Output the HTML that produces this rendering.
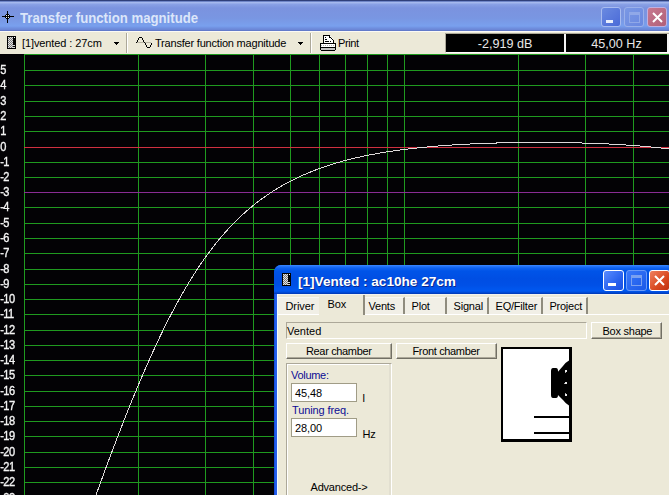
<!DOCTYPE html>
<html><head><meta charset="utf-8">
<style>
*{box-sizing:border-box;margin:0;padding:0}
html,body{width:669px;height:495px;overflow:hidden;background:#000;font-family:"Liberation Sans",sans-serif;font-size:11px;color:#000}
.a{position:absolute}
.t{position:absolute;white-space:pre;line-height:1}
#title{left:0;top:0;width:669px;height:31px;background:linear-gradient(#2f3f7a 0px,#2f3f7a 1px,#6f86c8 1px,#6f86c8 2px,#a7baee 2px,#a2b6ec 3px,#8aa2e6 4px,#7b93df 8px,#7996e2 18px,#79a0ee 26px,#7090e0 28px,#6a84d4 30px,#5a70c0 31px)}
#tb{left:0;top:31px;width:669px;height:23px;background:#ece9d8;border-top:1px solid #fbfaf5}
.disp{position:absolute;top:33px;height:19px;background:#000;color:#e8e8e8;font-size:12.6px;text-align:center;line-height:19px}
.btn{position:absolute;background:#ece9d8;border:1px solid;border-color:#fff #716f64 #716f64 #fff;text-align:center;line-height:14px;letter-spacing:-0.3px}
</style></head><body>
<!-- main title bar -->
<div id="title" class="a"></div>
<svg class="a" style="left:0px;top:0px" width="16" height="28" viewBox="0 0 16 28" shape-rendering="crispEdges"><rect x="7" y="11" width="1" height="12" fill="#000"/><rect x="2" y="16" width="12" height="1" fill="#000"/><rect x="6" y="14" width="3" height="1" fill="#000"/><rect x="6" y="18" width="3" height="1" fill="#000"/><rect x="5" y="15" width="1" height="3" fill="#000"/><rect x="9" y="15" width="1" height="3" fill="#000"/><rect x="6" y="15" width="3" height="3" fill="#000"/><rect x="6" y="15" width="1" height="1" fill="#f0f0f0"/><rect x="8" y="15" width="1" height="1" fill="#f0f0f0"/><rect x="6" y="17" width="1" height="1" fill="#f0f0f0"/><rect x="8" y="17" width="1" height="1" fill="#f0f0f0"/></svg>
<div class="t" style="left:20px;top:11.2px;font-size:14.2px;font-weight:bold;color:#dce6fa;transform:scaleX(0.93);transform-origin:0 0">Transfer function magnitude</div>
<!-- title buttons (inactive) -->
<div class="a" style="left:601px;top:7px;width:20px;height:20px;border:1px solid #a8bcf0;border-radius:3px;background:linear-gradient(135deg,#6a8ae0,#4a6ad8)"></div>
<div class="a" style="left:606px;top:20px;width:7px;height:3px;background:#e8eefc"></div>
<div class="a" style="left:624px;top:7px;width:20px;height:20px;border:1px solid #9ab0ea;border-radius:3px;background:linear-gradient(135deg,#7a98e4,#6a88e0)"></div>
<div class="a" style="left:629px;top:12px;width:11px;height:11px;border:1px solid #90a8e8;border-top-width:3px"></div>
<div class="a" style="left:647px;top:7px;width:20px;height:20px;border:1px solid #c0b0e0;border-radius:3px;background:linear-gradient(135deg,#c87890,#b06078)"></div>
<svg class="a" style="left:652px;top:12px" width="11" height="11" viewBox="0 0 11 11"><path d="M1,1 L10,10 M10,1 L1,10" stroke="#fff" stroke-width="2"/></svg>
<svg width="669" height="441" viewBox="0 54 669 441" style="position:absolute;left:0;top:54px;will-change:transform" shape-rendering="crispEdges">
<rect x="0" y="54" width="669" height="441" fill="#030205"/>
<rect x="24" y="54" width="645" height="1" fill="#1f9a1f"/>
<rect x="24" y="70" width="645" height="1" fill="#1f9a1f"/>
<rect x="24" y="85" width="645" height="1" fill="#1f9a1f"/>
<rect x="24" y="101" width="645" height="1" fill="#1f9a1f"/>
<rect x="24" y="116" width="645" height="1" fill="#1f9a1f"/>
<rect x="24" y="131" width="645" height="1" fill="#1f9a1f"/>
<rect x="24" y="162" width="645" height="1" fill="#1f9a1f"/>
<rect x="24" y="177" width="645" height="1" fill="#1f9a1f"/>
<rect x="24" y="207" width="645" height="1" fill="#1f9a1f"/>
<rect x="24" y="223" width="645" height="1" fill="#1f9a1f"/>
<rect x="24" y="238" width="645" height="1" fill="#1f9a1f"/>
<rect x="24" y="253" width="645" height="1" fill="#1f9a1f"/>
<rect x="24" y="269" width="645" height="1" fill="#1f9a1f"/>
<rect x="24" y="284" width="645" height="1" fill="#1f9a1f"/>
<rect x="24" y="299" width="645" height="1" fill="#1f9a1f"/>
<rect x="24" y="314" width="645" height="1" fill="#1f9a1f"/>
<rect x="24" y="330" width="645" height="1" fill="#1f9a1f"/>
<rect x="24" y="345" width="645" height="1" fill="#1f9a1f"/>
<rect x="24" y="360" width="645" height="1" fill="#1f9a1f"/>
<rect x="24" y="375" width="645" height="1" fill="#1f9a1f"/>
<rect x="24" y="391" width="645" height="1" fill="#1f9a1f"/>
<rect x="24" y="406" width="645" height="1" fill="#1f9a1f"/>
<rect x="24" y="421" width="645" height="1" fill="#1f9a1f"/>
<rect x="24" y="436" width="645" height="1" fill="#1f9a1f"/>
<rect x="24" y="452" width="645" height="1" fill="#1f9a1f"/>
<rect x="24" y="467" width="645" height="1" fill="#1f9a1f"/>
<rect x="24" y="482" width="645" height="1" fill="#1f9a1f"/>
<rect x="24" y="498" width="645" height="1" fill="#1f9a1f"/>
<rect x="24" y="54" width="1" height="441" fill="#1f9a1f"/>
<rect x="138" y="54" width="1" height="441" fill="#1f9a1f"/>
<rect x="205" y="54" width="1" height="441" fill="#1f9a1f"/>
<rect x="253" y="54" width="1" height="441" fill="#1f9a1f"/>
<rect x="290" y="54" width="1" height="441" fill="#1f9a1f"/>
<rect x="319" y="54" width="1" height="441" fill="#1f9a1f"/>
<rect x="345" y="54" width="1" height="441" fill="#1f9a1f"/>
<rect x="367" y="54" width="1" height="441" fill="#1f9a1f"/>
<rect x="387" y="54" width="1" height="441" fill="#1f9a1f"/>
<rect x="404" y="54" width="1" height="441" fill="#1f9a1f"/>
<rect x="518" y="54" width="1" height="441" fill="#1f9a1f"/>
<rect x="585" y="54" width="1" height="441" fill="#1f9a1f"/>
<rect x="633" y="54" width="1" height="441" fill="#1f9a1f"/>
<rect x="24" y="147" width="645" height="1" fill="#d03040"/>
<rect x="24" y="192" width="645" height="1" fill="#8a2c94"/>
<text x="0.3" y="73.6" transform="scale(0.88,1)" fill="#f4f4f4" stroke="#f4f4f4" stroke-width="0.35" style="font-family:'Liberation Sans';font-size:12.6px;letter-spacing:-0.7px">5</text>
<text x="0.3" y="88.6" transform="scale(0.88,1)" fill="#f4f4f4" stroke="#f4f4f4" stroke-width="0.35" style="font-family:'Liberation Sans';font-size:12.6px;letter-spacing:-0.7px">4</text>
<text x="0.3" y="104.6" transform="scale(0.88,1)" fill="#f4f4f4" stroke="#f4f4f4" stroke-width="0.35" style="font-family:'Liberation Sans';font-size:12.6px;letter-spacing:-0.7px">3</text>
<text x="0.3" y="119.6" transform="scale(0.88,1)" fill="#f4f4f4" stroke="#f4f4f4" stroke-width="0.35" style="font-family:'Liberation Sans';font-size:12.6px;letter-spacing:-0.7px">2</text>
<text x="0.3" y="134.6" transform="scale(0.88,1)" fill="#f4f4f4" stroke="#f4f4f4" stroke-width="0.35" style="font-family:'Liberation Sans';font-size:12.6px;letter-spacing:-0.7px">1</text>
<text x="0.3" y="150.6" transform="scale(0.88,1)" fill="#f4f4f4" stroke="#f4f4f4" stroke-width="0.35" style="font-family:'Liberation Sans';font-size:12.6px;letter-spacing:-0.7px">0</text>
<text x="0.3" y="165.6" transform="scale(0.88,1)" fill="#f4f4f4" stroke="#f4f4f4" stroke-width="0.35" style="font-family:'Liberation Sans';font-size:12.6px;letter-spacing:-0.7px">-1</text>
<text x="0.3" y="180.6" transform="scale(0.88,1)" fill="#f4f4f4" stroke="#f4f4f4" stroke-width="0.35" style="font-family:'Liberation Sans';font-size:12.6px;letter-spacing:-0.7px">-2</text>
<text x="0.3" y="195.6" transform="scale(0.88,1)" fill="#f4f4f4" stroke="#f4f4f4" stroke-width="0.35" style="font-family:'Liberation Sans';font-size:12.6px;letter-spacing:-0.7px">-3</text>
<text x="0.3" y="210.6" transform="scale(0.88,1)" fill="#f4f4f4" stroke="#f4f4f4" stroke-width="0.35" style="font-family:'Liberation Sans';font-size:12.6px;letter-spacing:-0.7px">-4</text>
<text x="0.3" y="226.6" transform="scale(0.88,1)" fill="#f4f4f4" stroke="#f4f4f4" stroke-width="0.35" style="font-family:'Liberation Sans';font-size:12.6px;letter-spacing:-0.7px">-5</text>
<text x="0.3" y="241.6" transform="scale(0.88,1)" fill="#f4f4f4" stroke="#f4f4f4" stroke-width="0.35" style="font-family:'Liberation Sans';font-size:12.6px;letter-spacing:-0.7px">-6</text>
<text x="0.3" y="256.6" transform="scale(0.88,1)" fill="#f4f4f4" stroke="#f4f4f4" stroke-width="0.35" style="font-family:'Liberation Sans';font-size:12.6px;letter-spacing:-0.7px">-7</text>
<text x="0.3" y="272.6" transform="scale(0.88,1)" fill="#f4f4f4" stroke="#f4f4f4" stroke-width="0.35" style="font-family:'Liberation Sans';font-size:12.6px;letter-spacing:-0.7px">-8</text>
<text x="0.3" y="287.6" transform="scale(0.88,1)" fill="#f4f4f4" stroke="#f4f4f4" stroke-width="0.35" style="font-family:'Liberation Sans';font-size:12.6px;letter-spacing:-0.7px">-9</text>
<text x="0.3" y="302.6" transform="scale(0.88,1)" fill="#f4f4f4" stroke="#f4f4f4" stroke-width="0.35" style="font-family:'Liberation Sans';font-size:12.6px;letter-spacing:-0.7px">-10</text>
<text x="0.3" y="317.6" transform="scale(0.88,1)" fill="#f4f4f4" stroke="#f4f4f4" stroke-width="0.35" style="font-family:'Liberation Sans';font-size:12.6px;letter-spacing:-0.7px">-11</text>
<text x="0.3" y="333.6" transform="scale(0.88,1)" fill="#f4f4f4" stroke="#f4f4f4" stroke-width="0.35" style="font-family:'Liberation Sans';font-size:12.6px;letter-spacing:-0.7px">-12</text>
<text x="0.3" y="348.6" transform="scale(0.88,1)" fill="#f4f4f4" stroke="#f4f4f4" stroke-width="0.35" style="font-family:'Liberation Sans';font-size:12.6px;letter-spacing:-0.7px">-13</text>
<text x="0.3" y="363.6" transform="scale(0.88,1)" fill="#f4f4f4" stroke="#f4f4f4" stroke-width="0.35" style="font-family:'Liberation Sans';font-size:12.6px;letter-spacing:-0.7px">-14</text>
<text x="0.3" y="378.6" transform="scale(0.88,1)" fill="#f4f4f4" stroke="#f4f4f4" stroke-width="0.35" style="font-family:'Liberation Sans';font-size:12.6px;letter-spacing:-0.7px">-15</text>
<text x="0.3" y="394.6" transform="scale(0.88,1)" fill="#f4f4f4" stroke="#f4f4f4" stroke-width="0.35" style="font-family:'Liberation Sans';font-size:12.6px;letter-spacing:-0.7px">-16</text>
<text x="0.3" y="409.6" transform="scale(0.88,1)" fill="#f4f4f4" stroke="#f4f4f4" stroke-width="0.35" style="font-family:'Liberation Sans';font-size:12.6px;letter-spacing:-0.7px">-17</text>
<text x="0.3" y="424.6" transform="scale(0.88,1)" fill="#f4f4f4" stroke="#f4f4f4" stroke-width="0.35" style="font-family:'Liberation Sans';font-size:12.6px;letter-spacing:-0.7px">-18</text>
<text x="0.3" y="439.6" transform="scale(0.88,1)" fill="#f4f4f4" stroke="#f4f4f4" stroke-width="0.35" style="font-family:'Liberation Sans';font-size:12.6px;letter-spacing:-0.7px">-19</text>
<text x="0.3" y="455.6" transform="scale(0.88,1)" fill="#f4f4f4" stroke="#f4f4f4" stroke-width="0.35" style="font-family:'Liberation Sans';font-size:12.6px;letter-spacing:-0.7px">-20</text>
<text x="0.3" y="470.6" transform="scale(0.88,1)" fill="#f4f4f4" stroke="#f4f4f4" stroke-width="0.35" style="font-family:'Liberation Sans';font-size:12.6px;letter-spacing:-0.7px">-21</text>
<text x="0.3" y="485.6" transform="scale(0.88,1)" fill="#f4f4f4" stroke="#f4f4f4" stroke-width="0.35" style="font-family:'Liberation Sans';font-size:12.6px;letter-spacing:-0.7px">-22</text>
<text x="0.3" y="501.6" transform="scale(0.88,1)" fill="#f4f4f4" stroke="#f4f4f4" stroke-width="0.35" style="font-family:'Liberation Sans';font-size:12.6px;letter-spacing:-0.7px">-23</text>
<path d="M88.0,517.41 L89.0,514.59 L90.0,511.77 L91.0,508.96 L92.0,506.15 L93.0,503.35 L94.0,500.56 L95.0,497.78 L96.0,495.00 L97.0,492.22 L98.0,489.46 L99.0,486.70 L100.0,483.95 L101.0,481.21 L102.0,478.47 L103.0,475.74 L104.0,473.02 L105.0,470.31 L106.0,467.60 L107.0,464.90 L108.0,462.21 L109.0,459.53 L110.0,456.86 L111.0,454.19 L112.0,451.54 L113.0,448.89 L114.0,446.25 L115.0,443.62 L116.0,441.00 L117.0,438.39 L118.0,435.79 L119.0,433.19 L120.0,430.61 L121.0,428.04 L122.0,425.48 L123.0,422.92 L124.0,420.38 L125.0,417.85 L126.0,415.32 L127.0,412.81 L128.0,410.31 L129.0,407.82 L130.0,405.34 L131.0,402.87 L132.0,400.41 L133.0,397.96 L134.0,395.53 L135.0,393.10 L136.0,390.69 L137.0,388.29 L138.0,385.90 L139.0,383.53 L140.0,381.16 L141.0,378.81 L142.0,376.47 L143.0,374.14 L144.0,371.83 L145.0,369.53 L146.0,367.24 L147.0,364.96 L148.0,362.70 L149.0,360.45 L150.0,358.22 L151.0,355.99 L152.0,353.79 L153.0,351.59 L154.0,349.41 L155.0,347.24 L156.0,345.09 L157.0,342.95 L158.0,340.82 L159.0,338.71 L160.0,336.62 L161.0,334.53 L162.0,332.47 L163.0,330.41 L164.0,328.37 L165.0,326.35 L166.0,324.34 L167.0,322.35 L168.0,320.37 L169.0,318.40 L170.0,316.46 L171.0,314.52 L172.0,312.60 L173.0,310.70 L174.0,308.81 L175.0,306.94 L176.0,305.08 L177.0,303.24 L178.0,301.41 L179.0,299.60 L180.0,297.81 L181.0,296.03 L182.0,294.26 L183.0,292.51 L184.0,290.78 L185.0,289.06 L186.0,287.36 L187.0,285.67 L188.0,284.00 L189.0,282.34 L190.0,280.70 L191.0,279.07 L192.0,277.46 L193.0,275.87 L194.0,274.29 L195.0,272.73 L196.0,271.18 L197.0,269.64 L198.0,268.13 L199.0,266.62 L200.0,265.13 L201.0,263.66 L202.0,262.20 L203.0,260.76 L204.0,259.33 L205.0,257.92 L206.0,256.52 L207.0,255.13 L208.0,253.76 L209.0,252.41 L210.0,251.07 L211.0,249.74 L212.0,248.43 L213.0,247.13 L214.0,245.85 L215.0,244.58 L216.0,243.32 L217.0,242.08 L218.0,240.85 L219.0,239.63 L220.0,238.43 L221.0,237.24 L222.0,236.07 L223.0,234.91 L224.0,233.76 L225.0,232.62 L226.0,231.50 L227.0,230.39 L228.0,229.29 L229.0,228.21 L230.0,227.13 L231.0,226.07 L232.0,225.02 L233.0,223.99 L234.0,222.96 L235.0,221.95 L236.0,220.95 L237.0,219.96 L238.0,218.99 L239.0,218.02 L240.0,217.07 L241.0,216.12 L242.0,215.19 L243.0,214.27 L244.0,213.36 L245.0,212.46 L246.0,211.57 L247.0,210.69 L248.0,209.82 L249.0,208.97 L250.0,208.12 L251.0,207.28 L252.0,206.45 L253.0,205.64 L254.0,204.83 L255.0,204.03 L256.0,203.24 L257.0,202.46 L258.0,201.69 L259.0,200.93 L260.0,200.18 L261.0,199.44 L262.0,198.71 L263.0,197.98 L264.0,197.26 L265.0,196.56 L266.0,195.86 L267.0,195.17 L268.0,194.49 L269.0,193.81 L270.0,193.15 L271.0,192.49 L272.0,191.84 L273.0,191.20 L274.0,190.56 L275.0,189.93 L276.0,189.31 L277.0,188.70 L278.0,188.10 L279.0,187.50 L280.0,186.91 L281.0,186.33 L282.0,185.75 L283.0,185.18 L284.0,184.62 L285.0,184.07 L286.0,183.52 L287.0,182.98 L288.0,182.44 L289.0,181.91 L290.0,181.39 L291.0,180.88 L292.0,180.37 L293.0,179.86 L294.0,179.37 L295.0,178.87 L296.0,178.39 L297.0,177.91 L298.0,177.43 L299.0,176.97 L300.0,176.50 L301.0,176.05 L302.0,175.60 L303.0,175.15 L304.0,174.71 L305.0,174.27 L306.0,173.84 L307.0,173.42 L308.0,173.00 L309.0,172.59 L310.0,172.18 L311.0,171.77 L312.0,171.37 L313.0,170.98 L314.0,170.59 L315.0,170.20 L316.0,169.82 L317.0,169.45 L318.0,169.07 L319.0,168.71 L320.0,168.34 L321.0,167.99 L322.0,167.63 L323.0,167.28 L324.0,166.94 L325.0,166.60 L326.0,166.26 L327.0,165.93 L328.0,165.60 L329.0,165.27 L330.0,164.95 L331.0,164.64 L332.0,164.32 L333.0,164.01 L334.0,163.71 L335.0,163.41 L336.0,163.11 L337.0,162.81 L338.0,162.52 L339.0,162.24 L340.0,161.95 L341.0,161.67 L342.0,161.39 L343.0,161.12 L344.0,160.85 L345.0,160.58 L346.0,160.32 L347.0,160.06 L348.0,159.80 L349.0,159.55 L350.0,159.30 L351.0,159.05 L352.0,158.80 L353.0,158.56 L354.0,158.32 L355.0,158.09 L356.0,157.85 L357.0,157.62 L358.0,157.39 L359.0,157.17 L360.0,156.95 L361.0,156.73 L362.0,156.51 L363.0,156.30 L364.0,156.09 L365.0,155.88 L366.0,155.67 L367.0,155.47 L368.0,155.27 L369.0,155.07 L370.0,154.87 L371.0,154.68 L372.0,154.49 L373.0,154.30 L374.0,154.11 L375.0,153.93 L376.0,153.75 L377.0,153.57 L378.0,153.39 L379.0,153.21 L380.0,153.04 L381.0,152.87 L382.0,152.70 L383.0,152.54 L384.0,152.37 L385.0,152.21 L386.0,152.05 L387.0,151.89 L388.0,151.73 L389.0,151.58 L390.0,151.43 L391.0,151.28 L392.0,151.13 L393.0,150.98 L394.0,150.84 L395.0,150.69 L396.0,150.55 L397.0,150.41 L398.0,150.27 L399.0,150.14 L400.0,150.00 L401.0,149.87 L402.0,149.74 L403.0,149.61 L404.0,149.48 L405.0,149.36 L406.0,149.24 L407.0,149.11 L408.0,148.99 L409.0,148.87 L410.0,148.75 L411.0,148.64 L412.0,148.52 L413.0,148.41 L414.0,148.30 L415.0,148.19 L416.0,148.08 L417.0,147.97 L418.0,147.87 L419.0,147.76 L420.0,147.66 L421.0,147.56 L422.0,147.46 L423.0,147.36 L424.0,147.26 L425.0,147.16 L426.0,147.07 L427.0,146.98 L428.0,146.88 L429.0,146.79 L430.0,146.70 L431.0,146.61 L432.0,146.53 L433.0,146.44 L434.0,146.35 L435.0,146.27 L436.0,146.19 L437.0,146.11 L438.0,146.03 L439.0,145.95 L440.0,145.87 L441.0,145.79 L442.0,145.72 L443.0,145.64 L444.0,145.57 L445.0,145.49 L446.0,145.42 L447.0,145.35 L448.0,145.28 L449.0,145.22 L450.0,145.15 L451.0,145.08 L452.0,145.02 L453.0,144.95 L454.0,144.89 L455.0,144.83 L456.0,144.76 L457.0,144.70 L458.0,144.64 L459.0,144.59 L460.0,144.53 L461.0,144.47 L462.0,144.42 L463.0,144.36 L464.0,144.31 L465.0,144.25 L466.0,144.20 L467.0,144.15 L468.0,144.10 L469.0,144.05 L470.0,144.00 L471.0,143.95 L472.0,143.91 L473.0,143.86 L474.0,143.82 L475.0,143.77 L476.0,143.73 L477.0,143.68 L478.0,143.64 L479.0,143.60 L480.0,143.56 L481.0,143.52 L482.0,143.48 L483.0,143.44 L484.0,143.41 L485.0,143.37 L486.0,143.33 L487.0,143.30 L488.0,143.26 L489.0,143.23 L490.0,143.20 L491.0,143.17 L492.0,143.13 L493.0,143.10 L494.0,143.07 L495.0,143.04 L496.0,143.02 L497.0,142.99 L498.0,142.96 L499.0,142.93 L500.0,142.91 L501.0,142.88 L502.0,142.86 L503.0,142.84 L504.0,142.81 L505.0,142.79 L506.0,142.77 L507.0,142.75 L508.0,142.73 L509.0,142.71 L510.0,142.69 L511.0,142.67 L512.0,142.65 L513.0,142.64 L514.0,142.62 L515.0,142.60 L516.0,142.59 L517.0,142.57 L518.0,142.56 L519.0,142.55 L520.0,142.53 L521.0,142.52 L522.0,142.51 L523.0,142.50 L524.0,142.49 L525.0,142.48 L526.0,142.47 L527.0,142.46 L528.0,142.46 L529.0,142.45 L530.0,142.44 L531.0,142.44 L532.0,142.43 L533.0,142.43 L534.0,142.43 L535.0,142.42 L536.0,142.42 L537.0,142.42 L538.0,142.42 L539.0,142.42 L540.0,142.42 L541.0,142.42 L542.0,142.42 L543.0,142.42 L544.0,142.42 L545.0,142.43 L546.0,142.43 L547.0,142.43 L548.0,142.44 L549.0,142.45 L550.0,142.45 L551.0,142.46 L552.0,142.47 L553.0,142.47 L554.0,142.48 L555.0,142.49 L556.0,142.50 L557.0,142.51 L558.0,142.52 L559.0,142.54 L560.0,142.55 L561.0,142.56 L562.0,142.58 L563.0,142.59 L564.0,142.61 L565.0,142.62 L566.0,142.64 L567.0,142.66 L568.0,142.67 L569.0,142.69 L570.0,142.71 L571.0,142.73 L572.0,142.75 L573.0,142.77 L574.0,142.80 L575.0,142.82 L576.0,142.84 L577.0,142.87 L578.0,142.89 L579.0,142.92 L580.0,142.94 L581.0,142.97 L582.0,143.00 L583.0,143.03 L584.0,143.05 L585.0,143.08 L586.0,143.11 L587.0,143.15 L588.0,143.18 L589.0,143.21 L590.0,143.24 L591.0,143.28 L592.0,143.31 L593.0,143.35 L594.0,143.39 L595.0,143.42 L596.0,143.46 L597.0,143.50 L598.0,143.54 L599.0,143.58 L600.0,143.62 L601.0,143.66 L602.0,143.71 L603.0,143.75 L604.0,143.80 L605.0,143.84 L606.0,143.89 L607.0,143.93 L608.0,143.98 L609.0,144.03 L610.0,144.08 L611.0,144.13 L612.0,144.18 L613.0,144.24 L614.0,144.29 L615.0,144.34 L616.0,144.40 L617.0,144.45 L618.0,144.51 L619.0,144.57 L620.0,144.63 L621.0,144.69 L622.0,144.75 L623.0,144.81 L624.0,144.88 L625.0,144.94 L626.0,145.00 L627.0,145.07 L628.0,145.14 L629.0,145.21 L630.0,145.28 L631.0,145.35 L632.0,145.42 L633.0,145.49 L634.0,145.56 L635.0,145.64 L636.0,145.71 L637.0,145.79 L638.0,145.87 L639.0,145.95 L640.0,146.03 L641.0,146.11 L642.0,146.19 L643.0,146.28 L644.0,146.36 L645.0,146.45 L646.0,146.54 L647.0,146.63 L648.0,146.72 L649.0,146.81 L650.0,146.90 L651.0,147.00 L652.0,147.09 L653.0,147.19 L654.0,147.29 L655.0,147.39 L656.0,147.49 L657.0,147.59 L658.0,147.70 L659.0,147.80 L660.0,147.91 L661.0,148.02 L662.0,148.13 L663.0,148.24 L664.0,148.35 L665.0,148.47 L666.0,148.59 L667.0,148.70 L668.0,148.82 L669.0,148.94 L670.0,149.07" fill="none" stroke="#dedada" stroke-width="1" shape-rendering="crispEdges"/>
</svg>
<!-- toolbar -->
<div id="tb" class="a"></div>
<!-- toolbar items -->
<svg class="a" style="left:7px;top:36px" width="9" height="13" viewBox="0 0 9 13" shape-rendering="crispEdges"><rect x="0" y="0" width="9" height="13" fill="#000"/><rect x="1" y="1" width="5" height="11" fill="#7a7a7a"/><rect x="1" y="1" width="1" height="1" fill="#e4e4e4"/><rect x="3" y="1" width="1" height="1" fill="#e4e4e4"/><rect x="5" y="1" width="1" height="1" fill="#e4e4e4"/><rect x="2" y="2" width="1" height="1" fill="#e4e4e4"/><rect x="4" y="2" width="1" height="1" fill="#e4e4e4"/><rect x="1" y="3" width="1" height="1" fill="#e4e4e4"/><rect x="3" y="3" width="1" height="1" fill="#e4e4e4"/><rect x="5" y="3" width="1" height="1" fill="#e4e4e4"/><rect x="2" y="4" width="1" height="1" fill="#e4e4e4"/><rect x="4" y="4" width="1" height="1" fill="#e4e4e4"/><rect x="1" y="5" width="1" height="1" fill="#e4e4e4"/><rect x="3" y="5" width="1" height="1" fill="#e4e4e4"/><rect x="5" y="5" width="1" height="1" fill="#e4e4e4"/><rect x="2" y="6" width="1" height="1" fill="#e4e4e4"/><rect x="4" y="6" width="1" height="1" fill="#e4e4e4"/><rect x="1" y="7" width="1" height="1" fill="#e4e4e4"/><rect x="3" y="7" width="1" height="1" fill="#e4e4e4"/><rect x="5" y="7" width="1" height="1" fill="#e4e4e4"/><rect x="2" y="8" width="1" height="1" fill="#e4e4e4"/><rect x="4" y="8" width="1" height="1" fill="#e4e4e4"/><rect x="1" y="9" width="1" height="1" fill="#e4e4e4"/><rect x="3" y="9" width="1" height="1" fill="#e4e4e4"/><rect x="5" y="9" width="1" height="1" fill="#e4e4e4"/><rect x="2" y="10" width="1" height="1" fill="#e4e4e4"/><rect x="4" y="10" width="1" height="1" fill="#e4e4e4"/><rect x="1" y="11" width="1" height="1" fill="#e4e4e4"/><rect x="3" y="11" width="1" height="1" fill="#e4e4e4"/><rect x="5" y="11" width="1" height="1" fill="#e4e4e4"/><rect x="7" y="1" width="1" height="1" fill="#fff"/><rect x="5" y="9" width="3" height="1" fill="#d8d8d8"/><rect x="5" y="11" width="3" height="1" fill="#d8d8d8"/></svg>
<div class="t" style="left:22px;top:38px;letter-spacing:-0.1px">[1]vented : 27cm</div>
<svg class="a" style="left:114px;top:42px" width="6" height="3" shape-rendering="crispEdges"><path d="M0,0H5V1H4V2H3V3H2V2H1V1H0Z" fill="#000"/></svg>
<div class="a" style="left:126px;top:33px;width:2px;height:20px;border-left:1px solid #aca899;border-right:1px solid #fff"></div>
<svg class="a" style="left:130px;top:33px" width="26" height="18" viewBox="130 33 26 18" shape-rendering="crispEdges"><rect x="137" y="42" width="14" height="1" fill="#b8b4a4"/><rect x="136" y="42" width="1" height="1" fill="#000"/><rect x="137" y="41" width="1" height="1" fill="#000"/><rect x="137" y="40" width="1" height="1" fill="#000"/><rect x="138" y="39" width="1" height="1" fill="#000"/><rect x="138" y="38" width="1" height="1" fill="#000"/><rect x="139" y="37" width="1" height="1" fill="#000"/><rect x="140" y="37" width="1" height="1" fill="#000"/><rect x="141" y="37" width="1" height="1" fill="#000"/><rect x="142" y="38" width="1" height="1" fill="#000"/><rect x="142" y="39" width="1" height="1" fill="#000"/><rect x="143" y="40" width="1" height="1" fill="#000"/><rect x="143" y="41" width="1" height="1" fill="#000"/><rect x="144" y="42" width="1" height="1" fill="#000"/><rect x="145" y="43" width="1" height="1" fill="#000"/><rect x="145" y="44" width="1" height="1" fill="#000"/><rect x="146" y="45" width="1" height="1" fill="#000"/><rect x="146" y="46" width="1" height="1" fill="#000"/><rect x="147" y="47" width="1" height="1" fill="#000"/><rect x="148" y="47" width="1" height="1" fill="#000"/><rect x="149" y="47" width="1" height="1" fill="#000"/><rect x="150" y="46" width="1" height="1" fill="#000"/><rect x="150" y="45" width="1" height="1" fill="#000"/><rect x="151" y="44" width="1" height="1" fill="#000"/><rect x="151" y="43" width="1" height="1" fill="#000"/></svg>
<div class="t" style="left:155px;top:38px;letter-spacing:-0.2px">Transfer function magnitude</div>
<svg class="a" style="left:298px;top:42px" width="6" height="3" shape-rendering="crispEdges"><path d="M0,0H5V1H4V2H3V3H2V2H1V1H0Z" fill="#000"/></svg>
<div class="a" style="left:310px;top:33px;width:2px;height:20px;border-left:1px solid #aca899;border-right:1px solid #fff"></div>
<svg class="a" style="left:318px;top:33px" width="20" height="20" viewBox="318 33 20 20" shape-rendering="crispEdges"><rect x="324" y="36" width="6" height="7" fill="#fff"/><rect x="330" y="38" width="3" height="5" fill="#fff"/><rect x="330" y="37" width="1" height="1" fill="#fff"/><rect x="323" y="35" width="7" height="1" fill="#000"/><rect x="323" y="35" width="1" height="8" fill="#000"/><rect x="329" y="35" width="1" height="2" fill="#000"/><rect x="329" y="37" width="1" height="1" fill="#000"/><rect x="330" y="37" width="1" height="1" fill="#000"/><rect x="331" y="38" width="1" height="1" fill="#000"/><rect x="332" y="39" width="1" height="1" fill="#000"/><rect x="333" y="40" width="1" height="3" fill="#000"/><rect x="330" y="36" width="1" height="1" fill="#fff"/><rect x="325" y="37" width="1" height="1" fill="#000"/><rect x="325" y="39" width="2" height="1" fill="#000"/><rect x="325" y="41" width="4" height="1" fill="#000"/><rect x="330" y="41" width="1" height="1" fill="#000"/><rect x="320" y="43" width="16" height="7" fill="#000"/><rect x="321" y="44" width="14" height="3" fill="#fff"/><rect x="321" y="45" width="1" height="1" fill="#b0b0b0"/><rect x="323" y="45" width="1" height="1" fill="#b0b0b0"/><rect x="325" y="45" width="1" height="1" fill="#b0b0b0"/><rect x="327" y="45" width="1" height="1" fill="#b0b0b0"/><rect x="329" y="45" width="1" height="1" fill="#b0b0b0"/><rect x="331" y="45" width="1" height="1" fill="#b0b0b0"/><rect x="333" y="45" width="1" height="1" fill="#b0b0b0"/><rect x="321" y="48" width="14" height="2" fill="#c4c4c4"/><rect x="321" y="50" width="14" height="1" fill="#000"/></svg>
<div class="t" style="left:338px;top:38px;letter-spacing:-0.4px">Print</div>
<div class="a" style="left:445px;top:33px;width:224px;height:20px;border-top:1px solid #aca899;border-left:1px solid #aca899;border-bottom:1px solid #fff"></div>
<div class="disp" style="left:446px;top:34px;width:118px;height:18px;line-height:20px">-2,919 dB</div>
<div class="a" style="left:564px;top:34px;width:2px;height:18px;background:#f4f4f4"></div>
<div class="disp" style="left:566px;top:34px;width:101px;height:18px;line-height:20px">45,00 Hz</div>
<div class="a" style="left:667px;top:34px;width:2px;height:18px;background:#f4f4f4"></div>
<!-- dialog -->
<div class="a" style="left:274px;top:265px;width:400px;height:240px;background:#0054e3;border-radius:7px 7px 0 0;overflow:hidden">
  <div class="a" style="left:0;top:0;width:400px;height:29px;background:linear-gradient(#3d8cff 0px,#2a78fa 1px,#0f62f0 3px,#0054e8 6px,#004ee3 14px,#0050e6 20px,#0058f0 26px,#0044cc 28px,#0036b0 29px)"></div>
  <div class="a" style="left:0;top:29px;width:3px;height:220px;background:linear-gradient(90deg,#0a3cc8,#2060f0 1px,#2a5ee8 3px)"></div>
</div>
<svg class="a" style="left:282px;top:273px" width="9" height="13" viewBox="0 0 9 13" shape-rendering="crispEdges"><rect x="0" y="0" width="9" height="13" fill="#000"/><rect x="1" y="1" width="5" height="11" fill="#7a7a7a"/><rect x="1" y="1" width="1" height="1" fill="#e4e4e4"/><rect x="3" y="1" width="1" height="1" fill="#e4e4e4"/><rect x="5" y="1" width="1" height="1" fill="#e4e4e4"/><rect x="2" y="2" width="1" height="1" fill="#e4e4e4"/><rect x="4" y="2" width="1" height="1" fill="#e4e4e4"/><rect x="1" y="3" width="1" height="1" fill="#e4e4e4"/><rect x="3" y="3" width="1" height="1" fill="#e4e4e4"/><rect x="5" y="3" width="1" height="1" fill="#e4e4e4"/><rect x="2" y="4" width="1" height="1" fill="#e4e4e4"/><rect x="4" y="4" width="1" height="1" fill="#e4e4e4"/><rect x="1" y="5" width="1" height="1" fill="#e4e4e4"/><rect x="3" y="5" width="1" height="1" fill="#e4e4e4"/><rect x="5" y="5" width="1" height="1" fill="#e4e4e4"/><rect x="2" y="6" width="1" height="1" fill="#e4e4e4"/><rect x="4" y="6" width="1" height="1" fill="#e4e4e4"/><rect x="1" y="7" width="1" height="1" fill="#e4e4e4"/><rect x="3" y="7" width="1" height="1" fill="#e4e4e4"/><rect x="5" y="7" width="1" height="1" fill="#e4e4e4"/><rect x="2" y="8" width="1" height="1" fill="#e4e4e4"/><rect x="4" y="8" width="1" height="1" fill="#e4e4e4"/><rect x="1" y="9" width="1" height="1" fill="#e4e4e4"/><rect x="3" y="9" width="1" height="1" fill="#e4e4e4"/><rect x="5" y="9" width="1" height="1" fill="#e4e4e4"/><rect x="2" y="10" width="1" height="1" fill="#e4e4e4"/><rect x="4" y="10" width="1" height="1" fill="#e4e4e4"/><rect x="1" y="11" width="1" height="1" fill="#e4e4e4"/><rect x="3" y="11" width="1" height="1" fill="#e4e4e4"/><rect x="5" y="11" width="1" height="1" fill="#e4e4e4"/><rect x="7" y="1" width="1" height="1" fill="#fff"/><rect x="5" y="9" width="3" height="1" fill="#d8d8d8"/><rect x="5" y="11" width="3" height="1" fill="#d8d8d8"/></svg>
<div class="t" style="left:298px;top:275px;font-size:13.6px;font-weight:bold;color:#fff;text-shadow:1px 1px 0 #0a2890">[1]Vented : ac10he 27cm</div>
<!-- dialog title buttons -->
<div class="a" style="left:603px;top:270px;width:21px;height:21px;border:1px solid #fff;border-radius:3px;background:linear-gradient(135deg,#5a8cff,#2a62ee 60%,#1a50e0)"></div>
<div class="a" style="left:608px;top:283px;width:8px;height:3px;background:#fff"></div>
<div class="a" style="left:626px;top:270px;width:21px;height:21px;border:1px solid #6a9af8;border-radius:3px;background:linear-gradient(135deg,#3a78fa,#1a58e8)"></div>
<div class="a" style="left:631px;top:275px;width:11px;height:11px;border:1px solid #7aa0f0;border-top-width:3px"></div>
<div class="a" style="left:649px;top:270px;width:21px;height:21px;border:1px solid #fff;border-radius:3px;background:linear-gradient(135deg,#f08060,#d84820 60%,#c03010)"></div>
<svg class="a" style="left:654px;top:275px" width="11" height="11" viewBox="0 0 11 11"><path d="M1,1 L10,10 M10,1 L1,10" stroke="#fff" stroke-width="2"/></svg>
<!-- client -->
<div class="a" style="left:277px;top:294px;width:392px;height:201px;background:#ece9d8"></div>
<div class="a" style="left:277px;top:294px;width:392px;height:1px;background:#f4f3ee"></div>
<!-- tabs -->
<div class="a" style="left:278px;top:297px;width:41px;height:17px;background:#f1efe6;border-top:1px solid #f8f7f2"></div>
<div class="a" style="left:365px;top:297px;width:40px;height:17px;background:#f1efe6;border-top:1px solid #f8f7f2;border-right:2px solid #8f8c7e"></div>
<div class="a" style="left:405px;top:297px;width:42px;height:17px;background:#f1efe6;border-top:1px solid #f8f7f2;border-right:2px solid #8f8c7e"></div>
<div class="a" style="left:447px;top:297px;width:42px;height:17px;background:#f1efe6;border-top:1px solid #f8f7f2;border-right:2px solid #8f8c7e"></div>
<div class="a" style="left:489px;top:297px;width:54px;height:17px;background:#f1efe6;border-top:1px solid #f8f7f2;border-right:2px solid #8f8c7e"></div>
<div class="a" style="left:543px;top:297px;width:45px;height:17px;background:#f1efe6;border-top:1px solid #f8f7f2;border-right:2px solid #8f8c7e"></div>
<div class="a" style="left:319px;top:295px;width:46px;height:20px;background:#ece9d8;border-right:2px solid #8f8c7e"></div>
<div class="a" style="left:278px;top:314px;width:41px;height:1px;background:#fff"></div>
<div class="a" style="left:365px;top:314px;width:304px;height:1px;background:#fff"></div>
<div class="a" style="left:277px;top:294px;width:1px;height:201px;background:#f4fbff"></div>
<div class="t" style="left:285.5px;top:300.5px;letter-spacing:-0.1px">Driver</div>
<div class="t" style="left:327.5px;top:298.5px;letter-spacing:-0.1px">Box</div>
<div class="t" style="left:368.5px;top:300.5px;letter-spacing:-0.2px">Vents</div>
<div class="t" style="left:411.5px;top:300.5px;letter-spacing:-0.2px">Plot</div>
<div class="t" style="left:453.5px;top:300.5px;letter-spacing:-0.2px">Signal</div>
<div class="t" style="left:495.5px;top:300.5px;letter-spacing:-0.2px">EQ/Filter</div>
<div class="t" style="left:549.5px;top:300.5px;letter-spacing:-0.25px">Project</div>
<!-- Vented static -->
<div class="a" style="left:286px;top:322px;width:301px;height:17px;border-top:1px solid #aca899;border-left:1px solid #aca899;border-bottom:1px solid #fff;border-right:1px solid #fff"></div>
<div class="t" style="left:287px;top:325.5px">Vented</div>
<!-- buttons -->
<div class="btn" style="left:591px;top:322px;width:71px;height:17px;border-right:1px solid #716f64;border-bottom:1px solid #716f64;box-shadow:inset -1px -1px 0 #aca899"></div>
<div class="t" style="left:602.5px;top:325.5px;letter-spacing:-0.25px">Box shape</div>
<div class="btn" style="left:286px;top:343px;width:106px;height:16px;border-right:1px solid #716f64;border-bottom:1px solid #716f64;box-shadow:inset -1px -1px 0 #aca899"></div>
<div class="t" style="left:306px;top:345.5px;letter-spacing:-0.35px">Rear chamber</div>
<div class="btn" style="left:396px;top:343px;width:101px;height:16px;border-right:1px solid #716f64;border-bottom:1px solid #716f64;box-shadow:inset -1px -1px 0 #aca899"></div>
<div class="t" style="left:412.5px;top:345.5px;letter-spacing:-0.35px">Front chamber</div>
<!-- group -->
<div class="a" style="left:286px;top:363px;width:106px;height:140px;border:1px solid #aca899;border-right-color:#fff;box-shadow:inset 1px 1px 0 #fff"></div>
<div class="a" style="left:389px;top:364px;width:2px;height:140px;background:#e2dfd0"></div>
<div class="t" style="left:291px;top:369.5px;color:#0c0c94;letter-spacing:-0.3px">Volume:</div>
<div class="a" style="left:291px;top:383px;width:66px;height:19px;background:#fff;border:1px solid #a09c86"></div>
<div class="t" style="left:295px;top:387.5px;letter-spacing:-0.1px">45,48</div>
<div class="t" style="left:362.5px;top:392.5px">l</div>
<div class="t" style="left:292px;top:405px;color:#0c0c94;letter-spacing:-0.12px">Tuning freq.</div>
<div class="a" style="left:291px;top:418px;width:66px;height:19px;background:#fff;border:1px solid #a09c86"></div>
<div class="t" style="left:295px;top:422.5px;letter-spacing:-0.1px">28,00</div>
<div class="t" style="left:362.5px;top:429px;letter-spacing:-0.2px">Hz</div>
<div class="t" style="left:310.5px;top:482px;letter-spacing:-0.2px">Advanced-&gt;</div>
<!-- picture -->
<svg class="a" style="left:500px;top:346px" width="74" height="98" viewBox="500 346 74 98" shape-rendering="crispEdges">
<rect x="501" y="347" width="71" height="95" fill="#000"/>
<rect x="503" y="349" width="66" height="90" fill="#fff"/>
<path d="M553,368 H556 Q558,368 558,371 V395 Q558,398 556,398 H553 Q551,398 551,395 V371 Q551,368 553,368Z" fill="#000" shape-rendering="geometricPrecision"/>
<path d="M556,374 L563,366 Q566,362 569,360.5 V405.5 Q566,404 563,400 L556,393 Z" fill="#000" shape-rendering="geometricPrecision"/>
<rect x="565" y="370" width="2" height="2" fill="#e8e8e8"/><rect x="565" y="372" width="1" height="1" fill="#aaa"/>
<rect x="565" y="382" width="2" height="2" fill="#e8e8e8"/><rect x="564" y="383" width="1" height="1" fill="#aaa"/>
<rect x="565" y="394" width="2" height="2" fill="#e8e8e8"/><rect x="565" y="393" width="1" height="1" fill="#aaa"/>
<rect x="534" y="416" width="35" height="2" fill="#000"/>
<rect x="534" y="432" width="35" height="2" fill="#000"/>
</svg>
</body></html>
